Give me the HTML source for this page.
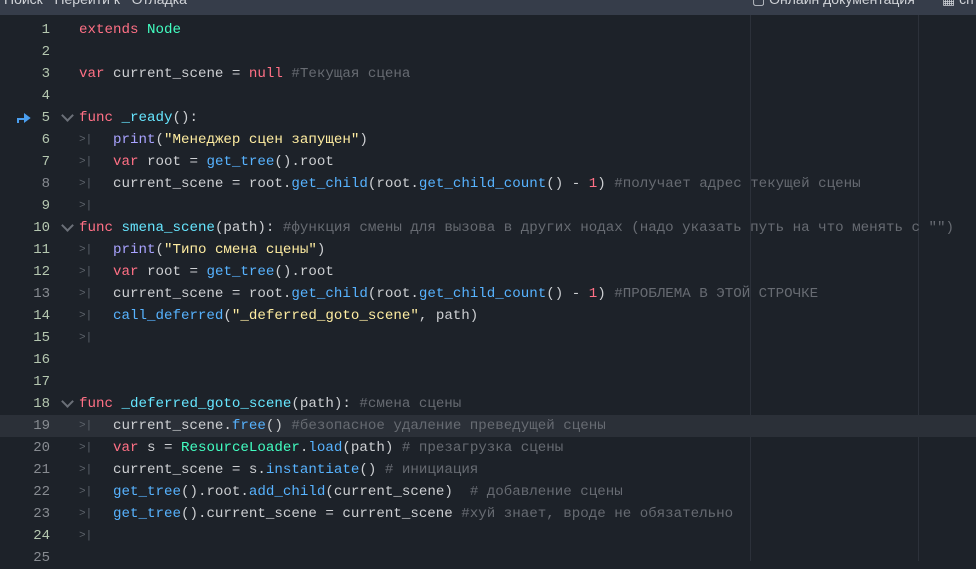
<!DOCTYPE html>
<html><head><meta charset="utf-8"><style>
body{margin:0;width:976px;height:561px;background:#1d2229;overflow:hidden;position:relative;font-family:"Liberation Mono","DejaVu Sans Mono",monospace;}
.top{position:absolute;left:0;top:0;width:976px;height:15px;background:#363d4a;overflow:hidden;font-family:"Liberation Sans","DejaVu Sans",sans-serif;font-size:14px;color:#d0d3d8;}
.top span{position:absolute;top:-9px}
.guide{position:absolute;top:15px;width:1px;height:546px;background:#2c313a}
.hl{position:absolute;left:0;top:415px;width:976px;height:22px;background:#2b3038}
.ln{position:absolute;left:0;width:50px;text-align:right;font-size:14px;line-height:22px;color:#b5c7b0}
.ln.g{color:#878b91}
.code{position:absolute;left:79px;font-size:14.17px;line-height:22px;color:#cdcfd2;white-space:pre}
.tab{position:absolute;left:79px;font-size:11px;line-height:22px;color:#5d636b}
.fold{position:absolute;left:63px;width:7px;height:7px;border-right:2px solid #6b7078;border-bottom:2px solid #6b7078;transform:rotate(45deg)}
.k{color:#ff7085}.t{color:#42ffc2}.c{color:#676b72}.f{color:#57b3ff}.p{color:#a9a3ff}.s{color:#ffeda1}.n{color:#66e6ff}
</style></head><body>
<div class="top"><span style="left:4px">Поиск &nbsp; Перейти к &nbsp; Отладка</span><span style="left:752px">▢ Онлайн документация</span><span style="left:942px">▦ сп</span></div>
<div class="guide" style="left:750px"></div>
<div class="guide" style="left:918px"></div>
<div class="hl"></div>
<svg style="position:absolute;left:16px;top:111px" width="16" height="14"><path d="M2 12 V8 H9 V4 L13 7 L9 10 V8" fill="none" stroke="#4a9eef" stroke-width="2"/><path d="M9 3 L14 7 L9 11Z" fill="#4a9eef"/></svg>
<div class="fold" style="top:111px"></div>
<div class="fold" style="top:221px"></div>
<div class="fold" style="top:397px"></div>
<div id="c"></div>
<script>
var L=[
['','<span class="k">extends</span> <span class="t">Node</span>'],
['',''],
['','<span class="k">var</span> current_scene = <span class="k">null</span> <span class="c">#Текущая сцена</span>'],
['',''],
['','<span class="k">func</span> <span class="n">_ready</span>():'],
['t','    <span class="p">print</span>(<span class="s">"Менеджер сцен запущен"</span>)'],
['t','    <span class="k">var</span> root = <span class="f">get_tree</span>().root'],
['tg','    current_scene = root.<span class="f">get_child</span>(root.<span class="f">get_child_count</span>() - <span class="k">1</span>) <span class="c">#получает адрес текущей сцены</span>'],
['t',''],
['','<span class="k">func</span> <span class="n">smena_scene</span>(path): <span class="c">#функция смены для вызова в других нодах (надо указать путь на что менять с "")</span>'],
['t','    <span class="p">print</span>(<span class="s">"Типо смена сцены"</span>)'],
['t','    <span class="k">var</span> root = <span class="f">get_tree</span>().root'],
['tg','    current_scene = root.<span class="f">get_child</span>(root.<span class="f">get_child_count</span>() - <span class="k">1</span>) <span class="c">#ПРОБЛЕМА В ЭТОЙ СТРОЧКЕ</span>'],
['t','    <span class="f">call_deferred</span>(<span class="s">"_deferred_goto_scene"</span>, path)'],
['t',''],
['',''],
['',''],
['','<span class="k">func</span> <span class="n">_deferred_goto_scene</span>(path): <span class="c">#смена сцены</span>'],
['tg','    current_scene.<span class="f">free</span>() <span class="c">#безопасное удаление преведущей сцены</span>'],
['tg','    <span class="k">var</span> s = <span class="t">ResourceLoader</span>.<span class="f">load</span>(path) <span class="c"># презагрузка сцены</span>'],
['tg','    current_scene = s.<span class="f">instantiate</span>() <span class="c"># инициация</span>'],
['tg','    <span class="f">get_tree</span>().root.<span class="f">add_child</span>(current_scene)  <span class="c"># добавление сцены</span>'],
['tg','    <span class="f">get_tree</span>().current_scene = current_scene <span class="c">#хуй знает, вроде не обязательно</span>'],
['t',''],
['g','']];
var h='';
for(var i=0;i<L.length;i++){var y=19+22*i;var o=L[i][0];
h+='<div class="ln'+(o.indexOf('g')>=0?' g':'')+'" style="top:'+y+'px">'+(i+1)+'</div>';
if(o.indexOf('t')>=0)h+='<div class="tab" style="top:'+y+'px">&gt;|</div>';
h+='<div class="code" style="top:'+y+'px">'+L[i][1]+'</div>';}
document.getElementById('c').innerHTML=h;
</script>
</body></html>
